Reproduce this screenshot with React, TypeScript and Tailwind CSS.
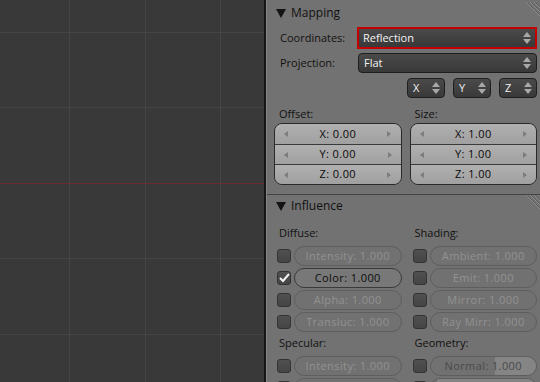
import React from "react";

const font = { fontFamily: '"Open Sans", "Noto Sans", "DejaVu Sans", sans-serif' };

function Tri() {
    return (
        <svg width="10" height="9" viewBox="0 0 10 9" className="shrink-0">
            <polygon points="0,0 10,0 5,9" fill="#141414" />
        </svg>
    );
}

function Grip() {
    return (
        <svg width="18" height="18" viewBox="0 0 18 18" className="absolute right-0 top-0">
            <line x1="4" y1="0" x2="18" y2="14" stroke="#8e8e8e" strokeWidth="1" />
            <line x1="5" y1="0" x2="18" y2="13" stroke="#5c5c5c" strokeWidth="1" />
            <line x1="8" y1="0" x2="18" y2="10" stroke="#8e8e8e" strokeWidth="1" />
            <line x1="9" y1="0" x2="18" y2="9" stroke="#5c5c5c" strokeWidth="1" />
            <line x1="12" y1="0" x2="18" y2="6" stroke="#8e8e8e" strokeWidth="1" />
            <line x1="13" y1="0" x2="18" y2="5" stroke="#5c5c5c" strokeWidth="1" />
        </svg>
    );
}

function UpDown() {
    return (
        <svg width="8" height="12" viewBox="0 0 8 12" className="shrink-0">
            <polygon points="4,0 8,5 0,5" fill="#a8a8a8" />
            <polygon points="0,7 8,7 4,12" fill="#a8a8a8" />
        </svg>
    );
}

function Header({ title }: { title: string }) {
    return (
        <div className="relative flex h-[24px] items-center gap-[5px] pl-[9px] pt-[2px] text-[12px] text-[#111]">
            <Tri />
            <span>{title}</span>
            <Grip />
        </div>
    );
}

function Dropdown({ text, red }: { text: string; red?: boolean }) {
    return (
        <div
            className={
                red
                    ? "flex h-[22px] flex-1 items-center justify-between border-2 border-[#c40000] bg-gradient-to-b from-[#4a4a4a] to-[#393939] pl-[4px] pr-[4px] text-[11px] text-[#f2f2f2]"
                    : "flex h-[20px] flex-1 items-center justify-between rounded-[4px] border border-[#1e1e1e] bg-gradient-to-b from-[#4a4a4a] to-[#393939] pl-[5px] pr-[5px] text-[11px] text-[#f2f2f2]"
            }
        >
            <span>{text}</span>
            <UpDown />
        </div>
    );
}

function Axis({ text }: { text: string }) {
    return (
        <div className="flex h-[20px] w-[38px] items-center justify-between rounded-[4px] border border-[#1e1e1e] bg-gradient-to-b from-[#4a4a4a] to-[#393939] pl-[5px] pr-[4px] text-[11px] text-[#f2f2f2]">
            <span>{text}</span>
            <UpDown />
        </div>
    );
}

function NumBlock({ values }: { values: string[] }) {
    return (
        <div className="flex flex-1 flex-col overflow-hidden rounded-[8px] border border-[#2a2a2a]">
            {values.map((v, i) => (
                <div
                    key={v}
                    className={
                        "flex h-[20px] items-center justify-between bg-gradient-to-b from-[#b0b0b0] to-[#a0a0a0] px-[9px] text-[11px] tracking-[0.4px] text-[#0a0a0a]" +
                        (i > 0 ? " border-t border-[#3a3a3a]" : "")
                    }
                >
                    <svg width="4" height="6" viewBox="0 0 4 6">
                        <polygon points="4,0 4,6 0,3" fill="#7c7c7c" />
                    </svg>
                    <span>{v}</span>
                    <svg width="4" height="6" viewBox="0 0 4 6">
                        <polygon points="0,0 0,6 4,3" fill="#7c7c7c" />
                    </svg>
                </div>
            ))}
        </div>
    );
}

function Check({ on }: { on?: boolean }) {
    return (
        <div className="relative h-[14px] w-[14px] shrink-0 rounded-[3px] border border-[#333] bg-gradient-to-b from-[#505050] to-[#454545]">
            {on && (
                <svg width="14" height="14" viewBox="0 0 14 14" className="absolute -left-px -top-px">
                    <polyline points="3,7 6,10 12,3" fill="none" stroke="#f2f2f2" strokeWidth="2" />
                </svg>
            )}
        </div>
    );
}

function Slider({ text, on, lit }: { text?: string; on?: boolean; lit?: number }) {
    return (
        <div className="flex h-[20px] flex-1 items-center gap-[3px] pl-[3px]">
            <Check on={on} />
            <div
                className={
                    "relative flex h-[20px] flex-1 items-center justify-center overflow-hidden rounded-full border text-[11px] tracking-[0.4px] " +
                    (on
                        ? "border-[#3a3a3a] bg-[#787878] text-[#0c0c0c]"
                        : "border-[#5e5e5e] bg-[#717171] text-[#929292]")
                }
            >
                {lit ? (
                    <div className="absolute bottom-0 right-0 top-0 bg-[#858585]" style={{ width: lit }} />
                ) : null}
                {text && <span className={lit ? "relative text-[#4a4a4a]" : "relative"}>{text}</span>}
            </div>
        </div>
    );
}

function Label({ text }: { text: string }) {
    return <div className="flex h-[16px] flex-1 items-center pl-[5px] text-[11px] text-[#111]">{text}</div>;
}

function Viewport() {
    const xs = [69.5, 145.5, 220.5];
    const ys = [32.5, 107.5, 258.5, 334.5];
    return (
        <div className="h-full w-[264px] shrink-0 bg-[#393939]">
            <svg width="264" height="382" viewBox="0 0 264 382">
                {xs.map((x) => (
                    <line key={x} x1={x} y1="0" x2={x} y2="382" stroke="#454545" />
                ))}
                {ys.map((y) => (
                    <line key={y} x1="0" y1={y} x2="264" y2={y} stroke="#454545" />
                ))}
                <line x1="0" y1="183.5" x2="264" y2="183.5" stroke="#6b2a30" />
            </svg>
        </div>
    );
}

export default function App() {
    return (
        <div className="flex h-[382px] w-[540px] overflow-hidden bg-[#727272]" style={font}>
            <Viewport />
            <div className="w-[2px] shrink-0 bg-[#161616]" />
            <div className="flex flex-1 flex-col border-l border-[#858585] bg-[#727272] pt-[2px]">
                {/* Mapping */}
                <Header title="Mapping" />
                <div className="flex flex-col pl-[7px] pr-[3px]">
                    <div className="mt-[5px] flex items-center">
                        <div className="w-[83px] pl-[6px] text-[11px] text-[#111]">Coordinates:</div>
                        <Dropdown text="Reflection" red />
                    </div>
                    <div className="mt-[4px] flex items-center">
                        <div className="w-[84px] pl-[6px] text-[11px] text-[#111]">Projection:</div>
                        <Dropdown text="Flat" />
                    </div>
                    <div className="mt-[5px] flex justify-end gap-[8px]">
                        <Axis text="X" />
                        <Axis text="Y" />
                        <Axis text="Z" />
                    </div>
                    <div className="mt-[8px] flex gap-[8px]">
                        <Label text="Offset:" />
                        <Label text="Size:" />
                    </div>
                    <div className="mt-[1px] flex gap-[8px]">
                        <NumBlock values={["X: 0.00", "Y: 0.00", "Z: 0.00"]} />
                        <NumBlock values={["X: 1.00", "Y: 1.00", "Z: 1.00"]} />
                    </div>
                </div>
                <div className="mt-[9px] border-t border-[#444]" />

                {/* Influence */}
                <Header title="Influence" />
                <div className="flex flex-col gap-[2px] pl-[7px] pr-[3px]">
                    <div className="mb-[3px] mt-[10px] flex gap-[8px]">
                        <Label text="Diffuse:" />
                        <Label text="Shading:" />
                    </div>
                    <div className="flex gap-[8px]">
                        <Slider text="Intensity: 1.000" />
                        <Slider text="Ambient: 1.000" />
                    </div>
                    <div className="flex gap-[8px]">
                        <Slider text="Color: 1.000" on />
                        <Slider text="Emit: 1.000" />
                    </div>
                    <div className="flex gap-[8px]">
                        <Slider text="Alpha: 1.000" />
                        <Slider text="Mirror: 1.000" />
                    </div>
                    <div className="flex gap-[8px]">
                        <Slider text="Transluc: 1.000" />
                        <Slider text="Ray Mirr: 1.000" />
                    </div>
                    <div className="mb-[3px] mt-[1px] flex gap-[8px]">
                        <Label text="Specular:" />
                        <Label text="Geometry:" />
                    </div>
                    <div className="flex gap-[8px]">
                        <Slider text="Intensity: 1.000" />
                        <Slider text="Normal: 1.000" lit={41} />
                    </div>
                    <div className="flex gap-[8px]">
                        <Slider />
                        <Slider lit={99} />
                    </div>
                </div>
            </div>
        </div>
    );
}
